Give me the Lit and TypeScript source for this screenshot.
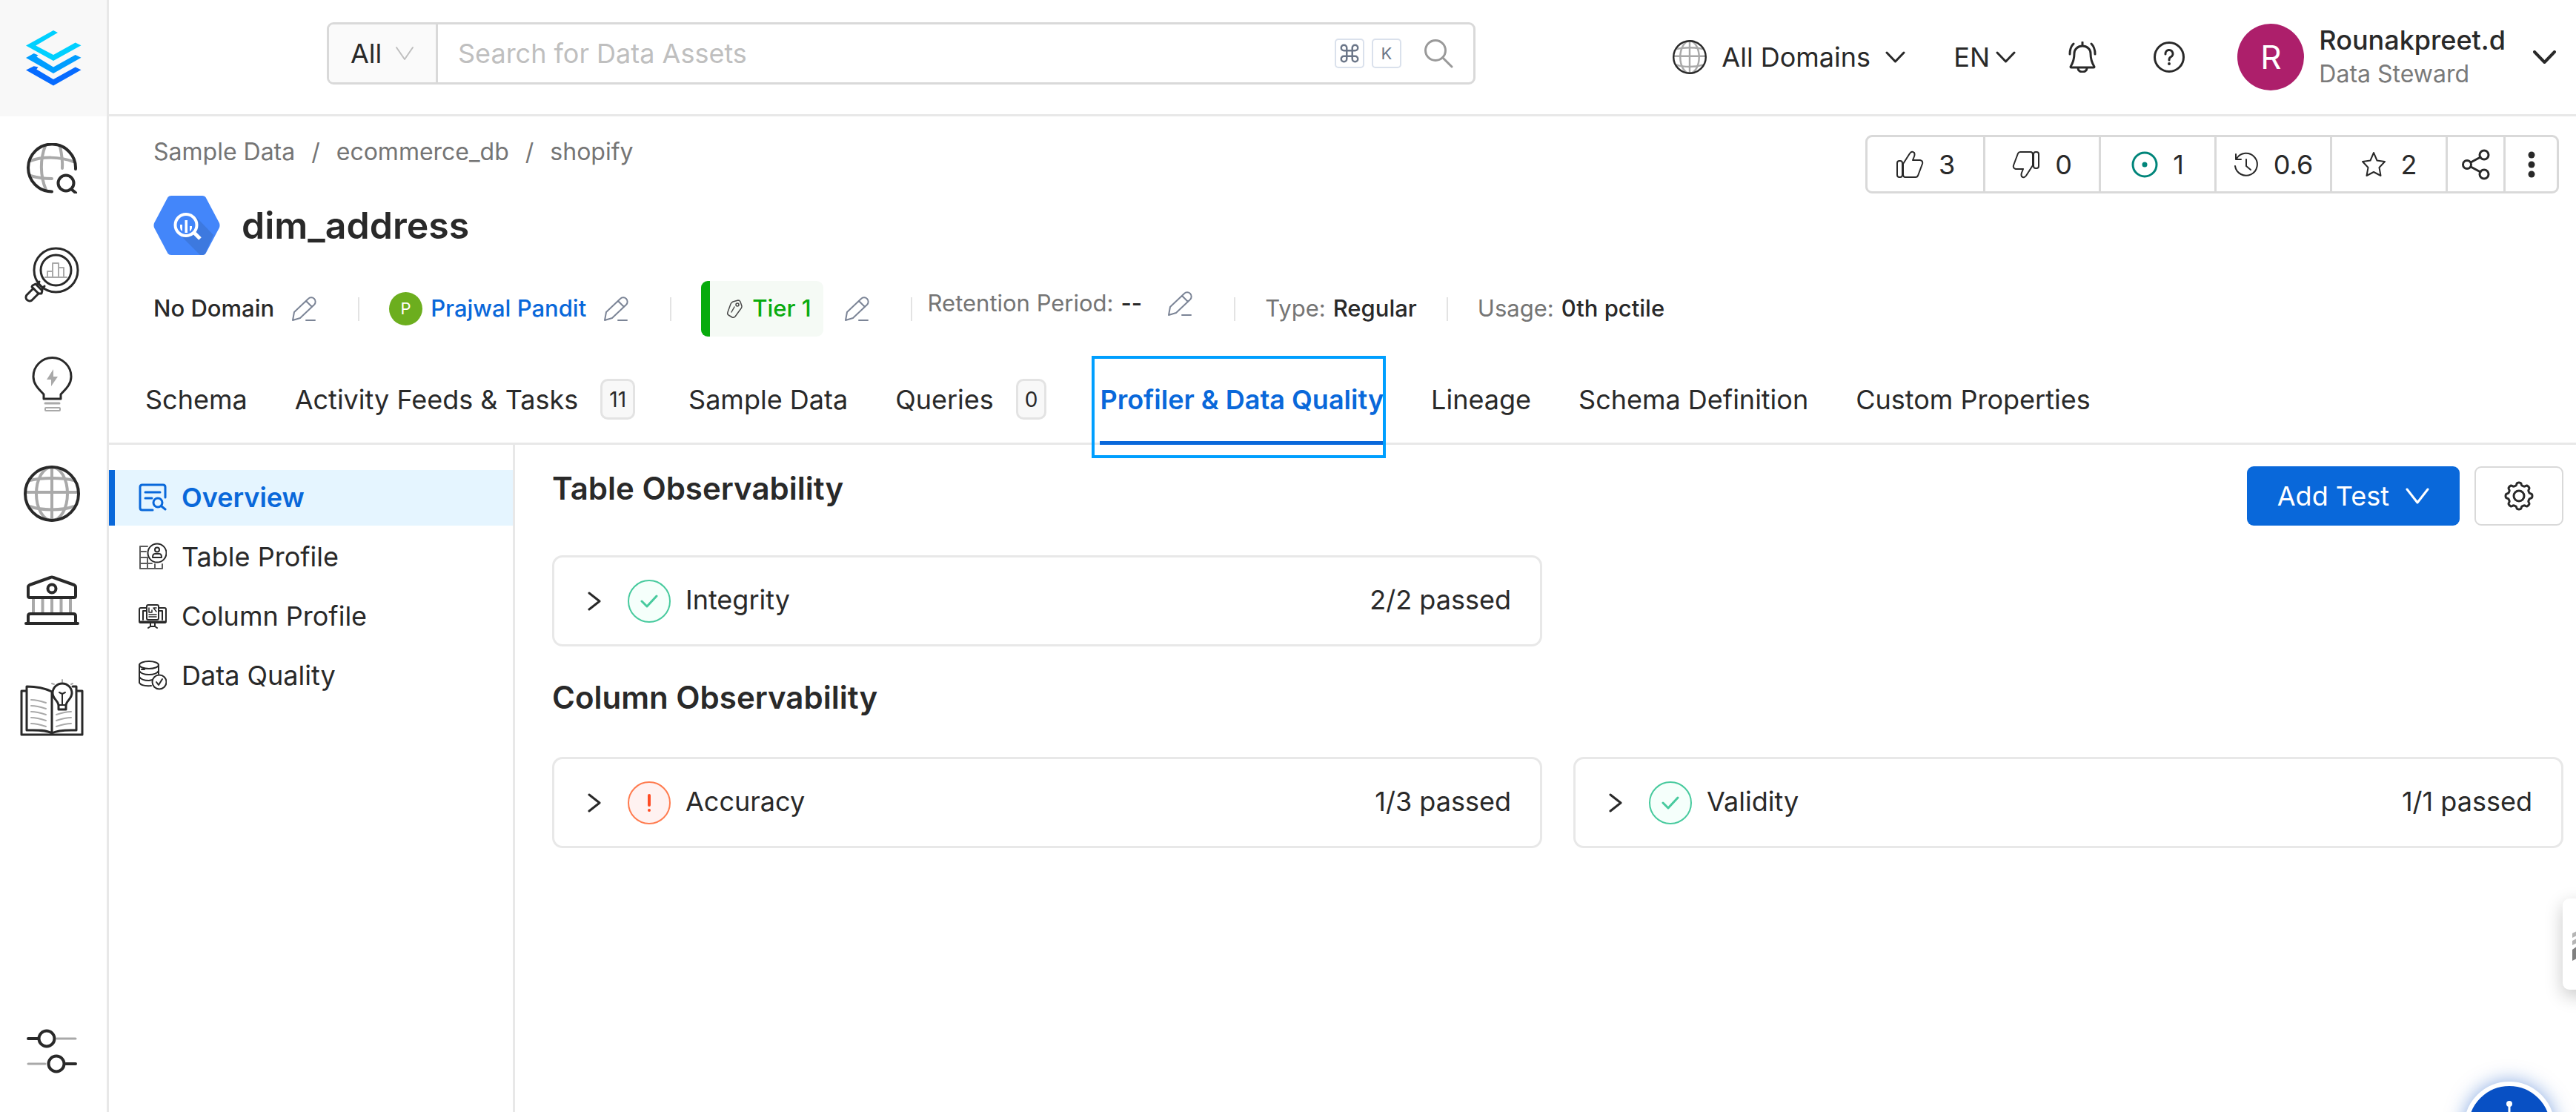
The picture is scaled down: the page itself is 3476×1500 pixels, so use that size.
import { LitElement, html, css, svg, nothing } from "lit";
import { customElement, property, state } from "lit/decorators.js";
import { classMap } from "lit/directives/class-map.js";

/** Wavy closed outline used by the settings gear. */
function gearPath(cx: number, cy: number, radius: number, depth: number, teeth: number): string {
  const points: string[] = [];
  for (let i = 0; i < 240; i++) {
    const a = (i / 240) * Math.PI * 2 - Math.PI / 2;
    const wave = Math.tanh(2 * Math.cos(teeth * (a + Math.PI / 2)));
    const r = radius + depth * wave;
    points.push(`${(cx + r * Math.cos(a)).toFixed(2)} ${(cy + r * Math.sin(a)).toFixed(2)}`);
  }
  return `M${points.join("L")}Z`;
}

const icon = (w: number, h: number, body: unknown) => html`<svg
  width=${w}
  height=${h}
  viewBox="0 0 ${w} ${h}"
  fill="none"
  stroke="currentColor"
  stroke-width="3"
  stroke-linecap="round"
  stroke-linejoin="round"
  aria-hidden="true"
>
  ${body}
</svg>`;

const chevron = (w: number, h: number, width = 3) =>
  icon(w, h, svg`<path stroke-width=${width} d="M2 2 L${w / 2} ${h - 2} L${w - 2} 2"/>`);

const logo = icon(
  75,
  77,
  svg`<g stroke="none">
    <path fill="#00d0ff" d="M37 1L43 4L13.300 21.600L37 34L66.700 17.500L74.500 21.300L37 42L0 21.600Z"/>
    <path fill="#009dff" d="M0 38L10.700 32L16.500 34.500L14.300 36.500L37 50.500L66.700 34L74.500 37.800L37 59L0 38Z"/>
    <path fill="#066bff" d="M0 54.500L10.700 49.200L16.500 50.500L14.300 53.500L37 67L66.700 50.500L74.500 54.300L37 75.500L0 54.500Z"/>
  </g>`,
);

const exploreIcon = icon(
  69,
  68,
  svg`<g stroke="#a9a9a9" stroke-width="4">
      <path d="M25 4C18 22 18 44 26 63"/><path d="M45 4C47 14 49 24 48 34"/>
      <path d="M5 24C22 18 44 18 63 25"/><path d="M5 44C15 47 24 48 34 48"/>
    </g>
    <path stroke-width="4" d="M34 65.500A32 32 0 1 1 66 35"/>
    <circle cx="53" cy="54" r="10.500" stroke-width="4"/><path stroke-width="4" d="M60 62L66 67"/>`,
);

const qualityIcon = icon(
  76,
  76,
  svg`<circle cx="43.500" cy="31.500" r="29.500"/><circle cx="43.500" cy="31.500" r="20.500"/>
    <g stroke="#a9a9a9" stroke-width="2"><path d="M29 41H58"/><path d="M32 41V33H39M39 41V22H47V41M47 28H54V41"/></g>
    <path d="M12 52L16 50L25 59L24 63L20 63L11 54Z"/><path d="M21 47L18 51M28 53L25 57"/>
    <path d="M13 56L4 65A5 5 0 0 0 11 72L20 63"/>`,
);

const insightIcon = icon(
  55,
  75,
  svg`<path stroke-width="3" d="M16 57V51C12 46 2 39 2 27A25.500 25.500 0 0 1 53 27C53 39 43 46 39 51V57H16Z"/>
    <path fill="#a9a9a9" stroke="none" d="M29 17L20 31H26L26 40L35 27H29Z"/>
    <g stroke="#a9a9a9"><path d="M18 63H37"/><rect x="18" y="69" width="20" height="4" rx="1" stroke-width="2"/></g>`,
);

const domainIcon = (size: number, width: number) => html`<svg
  width=${size}
  height=${size}
  viewBox="0 0 76 76"
  fill="none"
  stroke="currentColor"
  stroke-width=${width}
  aria-hidden="true"
>
  <g stroke="#a9a9a9">
    <path d="M38 2V74M2 36H74" />
    <ellipse cx="38" cy="38" rx="21" ry="36" />
    <path d="M8 20C25 16 51 16 68 20M8 55C25 61 51 61 68 55" />
  </g>
  <circle cx="38" cy="38" r="36" />
</svg>`;

const governIcon = icon(
  74,
  68,
  svg`<g stroke="#a9a9a9" stroke-width="4" stroke-linecap="butt"><path d="M12 32V50M24.500 32V50M37 32V50M49.500 32V50M62 32V50"/></g>
    <path stroke-width="4" d="M5 28V16Q5 14 7 13L35 3Q37 2 39 3L67 13Q69 14 69 16V28Q69 30 67 30H7Q5 30 5 28Z"/>
    <circle cx="37" cy="18" r="5.500" stroke-width="4"/>
    <path stroke-width="4" d="M5 65V55Q5 52 8 52H66Q69 52 69 55V65M2 65H72"/>`,
);

const glossaryIcon = icon(
  86,
  78,
  svg`<g stroke="#a9a9a9" stroke-width="2"><path d="M57 1V4M43 6L46 7M71 6L69 7"/>
      <path d="M15 28C22 28 29 30 35 32M15 36C22 36 29 38 35 40M15 44C22 44 29 46 35 48M15 52C22 52 29 54 35 56M15 60C22 60 29 62 35 64"/>
      <path d="M69 44C61 44 55 46 49 48M69 52C61 52 55 54 49 56M69 60C61 60 55 62 49 64"/></g>
    <path d="M8 16H2V75H84V16H77"/><path d="M43 73C34 68 20 69 9 69V10C22 10 33 12 43 17V73C52 68 66 69 76 69V10H71"/>
    <path fill="#fff" d="M52 36C52 29 44 27 44 19A13 13 0 0 1 70 19C70 27 62 29 62 36V41H52Z"/>
    <path d="M52 35H62M57 35V20M53 18L57 20L61 18" stroke-width="2"/>`,
);

const slidersIcon = icon(
  70,
  66,
  svg`<g stroke="#a9a9a9"><path d="M42 15H67M3 49H26"/></g>
    <path stroke-width="4" d="M3 15H16M54 49H67"/>
    <circle cx="28" cy="15" r="10.500" stroke-width="4"/><circle cx="41" cy="49" r="10.500" stroke-width="4"/>`,
);

const pencilIcon = icon(
  34,
  34,
  svg`<path stroke-width="2" d="M2 32L4 21L23 3A5.500 5.500 0 0 1 31 11L12 29ZM20 6L28 14M20 32H32"/>`,
);

const tableHexagon = icon(
  90,
  80,
  svg`<g stroke="none">
    <path fill="#4386fa" d="M24 0H66Q69 0 70.500 2L89 37Q90 40 89 43L70.500 78Q69 80 66 80H24Q21 80 19.500 78L1 43Q0 40 1 37L19.500 2Q21 0 24 0Z"/>
    <path fill="#3d79df" d="M57 28L81 53L70 78Q69 80 66 80H63L34 51Z"/>
    <circle cx="44" cy="39" r="15" fill="#4386fa"/>
    <path fill="#fff" d="M36 39H39V48Q36 46 36 43ZM42.500 33H46V50H42.500ZM49 41H52V44Q51 47 49 48Z"/>
  </g>
  <circle cx="44" cy="39.500" r="14.500" stroke="#fff" stroke-width="4"/><path stroke="#fff" stroke-width="5" stroke-linecap="butt" d="M54 49L63 58"/>`,
);

const thumbIcon = icon(
  38,
  38,
  svg`<g stroke-width="2"><rect x="2" y="14" width="7" height="22" rx="3"/>
    <path d="M10 18L19 4Q22 0 25 3Q26 5 25 8L23 13H33Q37 14 36 18L30 34Q29 36 27 36H13Q10 36 10 32Z"/></g>`,
);

const bellIcon = icon(
  38,
  42,
  svg`<g stroke-width="3"><path d="M19 1V6M3 34Q8 26 8 16A11 10 0 0 1 30 16Q30 26 35 34Q35 35 34 35H4Q3 35 3 34Z"/>
    <path d="M13 36A6 5 0 0 0 25 36M2 17Q2 8 7 3M36 17Q36 8 31 3"/></g>`,
);

const helpIcon = icon(
  42,
  42,
  svg`<circle cx="21" cy="21" r="19.500"/><path d="M16 17A5 5 0 1 1 23 21Q21 22 21 25"/><circle cx="21" cy="30" r="1" stroke-width="2"/>`,
);

const versionIcon = icon(
  34,
  36,
  svg`<g stroke-width="2"><path d="M4 10A15 15 0 1 1 2 20"/><path d="M3 4V11H10"/><path d="M17 11V20L23 25"/></g>`,
);

const starIcon = icon(
  34,
  36,
  svg`<path stroke-width="2" d="M17 2L21.500 12.500L32 14L24.500 22L26.500 33L17 28L7.500 33L9.500 22L2 14L12.500 12.500Z"/>`,
);

const shareIcon = icon(
  38,
  42,
  svg`<circle cx="7" cy="21" r="5.500"/><circle cx="30" cy="8" r="6"/><circle cx="30" cy="34" r="6"/><path d="M12 18L25 11M12 24L25 31"/>`,
);

const dotsIcon = icon(
  10,
  38,
  svg`<g fill="currentColor" stroke="none"><circle cx="5" cy="6" r="4.500"/><circle cx="5" cy="19" r="4.500"/><circle cx="5" cy="32" r="4.500"/></g>`,
);

const tagIcon = icon(
  22,
  26,
  svg`<path stroke-width="1.500" d="M2 17L6 6Q7 4 9 3L16 1Q18 1 19 3L21 9Q21 11 20 12L12 23Q10 25 8 24L3 21Q1 20 2 17ZM7 17L11 10"/><circle cx="15" cy="7" r="2" stroke-width="1.500"/>`,
);

const overviewIcon = icon(
  38,
  38,
  svg`<path d="M36 19V5Q36 2 33 2H5Q2 2 2 5V33Q2 36 5 36H19M9 12H29M9 20H18"/><circle cx="26" cy="26" r="6"/><path d="M31 31L36 35"/>`,
);

const tableProfileIcon = icon(
  38,
  38,
  svg`<g stroke-width="2"><path stroke="#5c5c5c" d="M12 5H2V35H32V29M2 12H10M2 20H12M2 28H18M12 20V35M22 29V35"/>
    <circle cx="25" cy="14" r="12.500"/><circle cx="25" cy="9.500" r="3"/><path d="M19 20Q19 15 22 15H28Q31 15 31 20Z"/></g>`,
);

const columnProfileIcon = icon(
  38,
  34,
  svg`<rect x="1" y="6" width="36" height="20" rx="2" stroke-width="2"/><path stroke-width="3" d="M2 25H36"/>
    <g stroke-width="2"><path d="M11 10H6V22M27 10H32V22" /><rect fill="#fff" x="11" y="2" width="16" height="20" rx="2"/>
    <path stroke-width="1.500" d="M14 6V12H18M18 12V9M20 6L24 11M21 6H24M14 15H24M14 18H24"/><path d="M16 27V31M22 27V31M13 33L16 31H22L25 33"/></g>`,
);

const dataQualityIcon = icon(
  38,
  40,
  svg`<g stroke-width="2"><ellipse cx="14" cy="6" rx="13" ry="5"/><path d="M1 6V30Q4 35 17 34M27 6V18M1 14Q4 19 14 19T27 14M1 22Q4 27 14 27L19 26M4 12H8"/>
    <circle cx="28" cy="29" r="9.500"/><path d="M24 29L27 33L32 25"/></g>`,
);

const gearIcon = icon(
  40,
  40,
  svg`<path stroke-width="3" d=${gearPath(20, 20, 16.2, 1.8, 8)}/><circle cx="20" cy="20" r="7"/>`,
);

const searchIcon = icon(40, 40, svg`<circle cx="16" cy="16" r="13.500"/><path d="M26 26L38 38"/>`);

const commandIcon = html`<svg
  width="30"
  height="30"
  viewBox="0 0 24 24"
  fill="none"
  stroke="currentColor"
  stroke-width="2"
  aria-hidden="true"
>
  <path
    d="M18 3a3 3 0 0 0-3 3v12a3 3 0 1 0 3-3H6a3 3 0 1 0 3 3V6a3 3 0 1 0-3 3h12a3 3 0 0 0 0-6z"
  />
</svg>`;

const base = css`
  *,
  *::before,
  *::after {
    box-sizing: border-box;
  }
  button,
  select,
  input {
    margin: 0;
    padding: 0;
    border: 0;
    background: none;
    color: inherit;
    font: inherit;
    appearance: none;
    outline: none;
  }
  button {
    cursor: pointer;
  }
  a {
    color: inherit;
    text-decoration: none;
  }
  svg {
    display: block;
    flex: none;
  }
`;

@customElement("side-rail")
class SideRail extends LitElement {
  static styles = [
    base,
    css`
      :host {
        display: flex;
        flex-direction: column;
        flex: none;
        width: 147px;
        border-right: 3px solid #e8e8e8;
      }
      .brand {
        display: flex;
        align-items: center;
        justify-content: center;
        height: 157px;
        background: #f8f8f8;
      }
      .links {
        display: flex;
        flex: 1;
        flex-direction: column;
        align-items: center;
        gap: 72px;
        padding: 36px 4px 48px 0;
      }
      .last {
        margin-top: auto;
      }
    `,
  ];

  render() {
    return html`
      <a class="brand" href="#home" aria-label="Home">${logo}</a>
      <nav class="links" aria-label="Main">
        <a href="#explore" aria-label="Explore">${exploreIcon}</a>
        <a href="#quality" aria-label="Quality">${qualityIcon}</a>
        <a href="#insights" aria-label="Insights">${insightIcon}</a>
        <a href="#domains" aria-label="Domains">${domainIcon(76, 4)}</a>
        <a href="#govern" aria-label="Govern">${governIcon}</a>
        <a href="#glossary" aria-label="Glossary">${glossaryIcon}</a>
        <a class="last" href="#settings" aria-label="Settings">${slidersIcon}</a>
      </nav>
    `;
  }
}

@customElement("top-bar")
class TopBar extends LitElement {
  static styles = [
    base,
    css`
      :host {
        display: flex;
        align-items: center;
        height: 157px;
        padding: 0 27px 0 294px;
        border-bottom: 3px solid #e8e8e8;
      }
      .search {
        display: flex;
        flex: 0 1 1550px;
        height: 84px;
        margin-bottom: 10px;
        border: 3px solid #d9d9d9;
        border-radius: 9px;
        overflow: hidden;
      }
      .scope {
        display: flex;
        align-items: center;
        gap: 17px;
        padding: 0 29px;
        border-right: 3px solid #d9d9d9;
        background: #fafafa;
        color: #bfbfbf;
      }
      .scope select {
        color: #292929;
      }
      .query {
        flex: 1;
        min-width: 0;
        padding: 0 27px;
      }
      .query::placeholder {
        color: #bfbfbf;
        opacity: 1;
      }
      .keys {
        display: flex;
        align-items: center;
        gap: 10px;
        color: #6b7688;
      }
      .key {
        display: flex;
        align-items: center;
        justify-content: center;
        width: 40px;
        height: 40px;
        border: 2px solid #dae1ec;
        border-radius: 5px;
        font-family: inherit;
        font-size: 22px;
      }
      .go {
        padding: 0 27px 0 30px;
        color: #999;
      }
      .tools {
        display: flex;
        align-items: center;
        gap: 65px;
        margin-left: auto;
      }
      .picker {
        display: flex;
        align-items: center;
        gap: 20px;
      }
      .language {
        display: flex;
        align-items: center;
        gap: 8px;
      }
      .tool {
        padding: 0 6px;
      }
      .account {
        display: flex;
        align-items: center;
        gap: 20px;
        text-align: left;
      }
      .avatar {
        display: flex;
        align-items: center;
        justify-content: center;
        width: 90px;
        height: 90px;
        border-radius: 50%;
        background: #ad1f6b;
        color: #fff;
        font-size: 44px;
      }
      .who {
        display: grid;
        margin-right: 17px;
      }
      .name {
        font-weight: 500;
        line-height: 46px;
      }
      .role {
        color: #7a7a7a;
        font-size: 32px;
        line-height: 46px;
      }
    `,
  ];

  render() {
    return html`
      <form class="search" role="search" @submit=${(e: Event) => e.preventDefault()}>
        <label class="scope">
          <select aria-label="Search scope">
            <option>All</option>
          </select>
          ${chevron(26, 20, 2)}
        </label>
        <input class="query" type="text" aria-label="Search" placeholder="Search for Data Assets" />
        <span class="keys">
          <kbd class="key">${commandIcon}</kbd>
          <kbd class="key">K</kbd>
        </span>
        <button class="go" type="submit" aria-label="Search">${searchIcon}</button>
      </form>
      <div class="tools">
        <label class="picker">
          ${domainIcon(46, 4)}
          <select aria-label="Domain">
            <option>All Domains</option>
          </select>
          ${chevron(27, 16)}
        </label>
        <label class="language">
          <select aria-label="Language">
            <option>EN</option>
          </select>
          ${chevron(27, 16)}
        </label>
        <button class="tool" aria-label="Notifications">${bellIcon}</button>
        <button class="tool" aria-label="Help">${helpIcon}</button>
        <button class="account">
          <span class="avatar">R</span>
          <span class="who">
            <span class="name">Rounakpreet.d</span>
            <span class="role">Data Steward</span>
          </span>
          ${chevron(31, 18, 4)}
        </button>
      </div>
    `;
  }
}

@customElement("entity-header")
class EntityHeader extends LitElement {
  static styles = [
    base,
    css`
      :host {
        display: flex;
        align-items: flex-start;
        justify-content: space-between;
        padding: 25px 23px 0 60px;
      }
      .crumbs {
        display: flex;
        gap: 22px;
        color: #757575;
        font-size: 32px;
        line-height: 46px;
      }
      .title {
        display: flex;
        align-items: center;
        gap: 29px;
        margin-top: 36px;
      }
      h1 {
        margin: 0;
        font-size: 50px;
        font-weight: 600;
        line-height: 60px;
      }
      .facts {
        display: flex;
        align-items: center;
        height: 75px;
        margin-top: 35px;
        font-size: 31px;
        font-weight: 500;
      }
      .fact {
        display: flex;
        align-items: center;
        gap: 10px;
      }
      .bar {
        width: 2px;
        height: 32px;
        margin: 0 40px 0 56px;
        background: #e3e3e3;
      }
      .bar.tight {
        margin-right: 21px;
      }
      .bar.even {
        margin-left: 40px;
      }
      .label {
        color: #757575;
        font-weight: 400;
      }
      .edit {
        margin-left: 13px;
        color: #7b8496;
      }
      .raised {
        padding-bottom: 14px;
      }
      .raised .edit {
        margin-left: 24px;
      }
      .owner {
        display: flex;
        align-items: center;
        gap: 11px;
        color: #0968da;
      }
      .initial {
        display: flex;
        align-items: center;
        justify-content: center;
        width: 45px;
        height: 45px;
        border-radius: 50%;
        background: #6cae1e;
        color: #fff;
        font-size: 22px;
        font-weight: 400;
      }
      .tier {
        display: flex;
        align-items: center;
        gap: 13px;
        height: 75px;
        margin-right: 5px;
        padding: 0 16px 0 22px;
        border-left: 12px solid #08ab0d;
        border-radius: 9px;
        background: #f5faf5;
        color: #08ab0d;
      }
      .tier svg {
        color: #4a4a4a;
      }
      .actions {
        display: flex;
        height: 79px;
        border: 3px solid #d9d9d9;
        border-radius: 9px;
      }
      .action {
        display: flex;
        align-items: center;
        justify-content: center;
        gap: 20px;
        width: 156px;
      }
      .action + .action {
        border-left: 3px solid #d9d9d9;
      }
      .action.slim {
        width: 78px;
      }
      .action.slim:last-child {
        width: 72px;
      }
      .flip svg {
        transform: rotate(180deg);
      }
      .open-task {
        color: #00857a;
      }
    `,
  ];

  private edit(label: string) {
    return html`<button class="edit" aria-label="Edit ${label}">${pencilIcon}</button>`;
  }

  render() {
    return html`
      <div>
        <nav class="crumbs" aria-label="Breadcrumb">
          <a href="#sample-data">Sample Data</a><span>/</span>
          <a href="#ecommerce_db">ecommerce_db</a><span>/</span>
          <a href="#shopify">shopify</a>
        </nav>
        <div class="title">
          ${tableHexagon}
          <h1>dim_address</h1>
        </div>
        <div class="facts">
          <div class="fact"><span>No Domain</span>${this.edit("domain")}</div>
          <span class="bar"></span>
          <div class="fact">
            <a class="owner" href="#owner"><span class="initial">P</span>Prajwal Pandit</a>
            ${this.edit("owner")}
          </div>
          <span class="bar"></span>
          <div class="fact">
            <a class="tier" href="#tier">${tagIcon}<span>Tier 1</span></a>
            ${this.edit("tier")}
          </div>
          <span class="bar tight"></span>
          <div class="fact raised">
            <span class="label">Retention Period:</span><span>--</span>
            ${this.edit("retention period")}
          </div>
          <span class="bar"></span>
          <div class="fact"><span class="label">Type:</span><span>Regular</span></div>
          <span class="bar even"></span>
          <div class="fact"><span class="label">Usage:</span><span>0th pctile</span></div>
        </div>
      </div>
      <div class="actions">
        <button class="action" aria-label="Up vote">${thumbIcon}<span>3</span></button>
        <button class="action flip" aria-label="Down vote">${thumbIcon}<span>0</span></button>
        <button class="action" aria-label="Open tasks">
          <span class="open-task"
            >${icon(
              36,
              36,
              svg`<circle cx="18" cy="18" r="16"/><circle cx="18" cy="18" r="3.500" fill="currentColor" stroke="none"/>`,
            )}</span
          ><span>1</span>
        </button>
        <button class="action" aria-label="Version">${versionIcon}<span>0.6</span></button>
        <button class="action" aria-label="Follow">${starIcon}<span>2</span></button>
        <button class="action slim" aria-label="Share">${shareIcon}</button>
        <button class="action slim" aria-label="More">${dotsIcon}</button>
      </div>
    `;
  }
}

interface Tab {
  label: string;
  count?: number;
}

@customElement("entity-tabs")
class EntityTabs extends LitElement {
  static styles = [
    base,
    css`
      :host {
        display: block;
        margin-top: 26px;
        border-bottom: 3px solid #e8e8e8;
      }
      .tabs {
        display: flex;
        gap: 64px;
        padding-left: 49px;
      }
      .tab {
        position: relative;
        display: flex;
        align-items: center;
        height: 117px;
        white-space: nowrap;
      }
      .counted {
        margin-right: 8px;
      }
      .count {
        display: flex;
        align-items: center;
        justify-content: center;
        height: 55px;
        margin-left: 30px;
        padding: 0 9px;
        border: 3px solid #e3e3e3;
        border-radius: 10px;
        background: #f8f8f8;
        font-size: 28px;
      }
      .active {
        color: #0968da;
        font-weight: 600;
      }
      .active::before {
        content: "";
        position: absolute;
        inset: auto 0 -3px 0;
        height: 5px;
        background: #0968da;
      }
      .active::after {
        content: "";
        position: absolute;
        inset: 0 -3px -21px -11px;
        border: 4px solid #009fff;
      }
    `,
  ];

  @state() private current = "Profiler & Data Quality";

  private tabs: Tab[] = [
    { label: "Schema" },
    { label: "Activity Feeds & Tasks", count: 11 },
    { label: "Sample Data" },
    { label: "Queries", count: 0 },
    { label: "Profiler & Data Quality" },
    { label: "Lineage" },
    { label: "Schema Definition" },
    { label: "Custom Properties" },
  ];

  render() {
    return html`<div class="tabs" role="tablist">
      ${this.tabs.map(
        ({ label, count }) => html`<button
          role="tab"
          aria-selected=${label === this.current}
          class=${classMap({
            tab: true,
            active: label === this.current,
            counted: count !== undefined,
          })}
          @click=${() => (this.current = label)}
        >
          ${label}${count === undefined ? nothing : html`<span class="count">${count}</span>`}
        </button>`,
      )}
    </div>`;
  }
}

@customElement("profiler-menu")
class ProfilerMenu extends LitElement {
  static styles = [
    base,
    css`
      :host {
        display: block;
        flex: none;
        width: 548px;
        border-right: 3px solid #e8e8e8;
      }
      .menu {
        display: grid;
        gap: 5px;
        padding-top: 34px;
      }
      .item {
        display: flex;
        align-items: center;
        gap: 20px;
        height: 75px;
        padding: 0 0 2px 32px;
        border-left: 8px solid transparent;
      }
      .current {
        border-left-color: #0968da;
        background: #e5f5ff;
        color: #0968da;
        font-weight: 600;
      }
    `,
  ];

  render() {
    return html`<nav class="menu" aria-label="Profiler">
      <a class="item current" href="#overview" aria-current="page">${overviewIcon}Overview</a>
      <a class="item" href="#table-profile">${tableProfileIcon}Table Profile</a>
      <a class="item" href="#column-profile">${columnProfileIcon}Column Profile</a>
      <a class="item" href="#data-quality">${dataQualityIcon}Data Quality</a>
    </nav>`;
  }
}

@customElement("check-card")
class CheckCard extends LitElement {
  static styles = [
    base,
    css`
      :host {
        display: block;
      }
      .card {
        display: flex;
        align-items: center;
        width: 100%;
        height: 123px;
        padding: 0 39px 0 44px;
        border: 3px solid #e8e8e8;
        border-radius: 14px;
      }
      .badge {
        display: flex;
        align-items: center;
        justify-content: center;
        width: 58px;
        height: 58px;
        margin: 0 20px 0 36px;
        border: 2px solid #48ca9e;
        border-radius: 50%;
        background: #f5fffb;
        color: #48ca9e;
      }
      .failed {
        border-color: #ff7c50;
        background: #fff2f1;
        color: #ff4c24;
      }
      .text {
        padding-bottom: 4px;
      }
      .result {
        margin-left: auto;
      }
    `,
  ];

  @property() label = "";
  @property({ type: Number }) passed = 0;
  @property({ type: Number }) total = 0;

  render() {
    const ok = this.passed === this.total;
    const mark = ok
      ? icon(24, 18, svg`<path d="M2 9L9 16L22 2"/>`)
      : icon(6, 26, svg`<path stroke-width="4" d="M3 3V16"/><path stroke-width="4" d="M3 23V23.100"/>`);
    return html`<button class="card" aria-expanded="false">
      ${icon(19, 26, svg`<path d="M3 2L17 13L3 24"/>`)}
      <span class=${classMap({ badge: true, failed: !ok })}>${mark}</span>
      <span class="text">${this.label}</span>
      <span class="text result">${this.passed}/${this.total} passed</span>
    </button>`;
  }
}

@customElement("app-root")
class AppRoot extends LitElement {
  static styles = [
    base,
    css`
      :host {
        position: relative;
        display: flex;
        min-height: 100vh;
        overflow: hidden;
        background: #fff;
        color: #292929;
        font-family: Inter, "Open Sans", sans-serif;
        font-size: 36px;
        line-height: 1.5;
      }
      .page {
        display: flex;
        flex: 1;
        flex-direction: column;
        min-width: 0;
      }
      .body {
        display: flex;
        flex: 1;
      }
      .content {
        flex: 1;
        padding: 29px 17px 0 50px;
      }
      .top {
        display: flex;
        align-items: flex-start;
        justify-content: space-between;
        height: 80px;
      }
      h2 {
        margin: 0;
        font-size: 42px;
        font-weight: 600;
        line-height: 60px;
      }
      .second {
        margin-top: 39px;
      }
      .cards {
        display: grid;
        grid-template-columns: 1fr 1fr;
        gap: 42px;
        margin-top: 40px;
      }
      .second + .cards {
        margin-top: 50px;
      }
      .buttons {
        display: flex;
        gap: 20px;
      }
      .add {
        display: flex;
        align-items: center;
        gap: 22px;
        height: 80px;
        padding: 0 41px;
        border-radius: 9px;
        background: #0968da;
        color: #fff;
      }
      .configure {
        display: flex;
        align-items: center;
        justify-content: center;
        width: 120px;
        height: 80px;
        border: 2px solid #d9d9d9;
        border-radius: 9px;
      }
      .drawer {
        position: absolute;
        right: -60px;
        bottom: 165px;
        width: 78px;
        height: 123px;
        padding: 42px 13px;
        border-radius: 9px;
        background: #fff;
        box-shadow: 0 8px 24px rgb(0 0 0 / 22%);
      }
      .bot {
        position: absolute;
        right: 29px;
        bottom: -81px;
        width: 122px;
        height: 122px;
        border: 6px solid #fff;
        border-radius: 50%;
        background: #0850c4;
        box-shadow: 0 0 26px rgb(9 80 196 / 50%);
        color: #fff;
      }
    `,
  ];

  render() {
    return html`
      <side-rail></side-rail>
      <div class="page">
        <top-bar></top-bar>
        <entity-header></entity-header>
        <entity-tabs></entity-tabs>
        <div class="body">
          <profiler-menu></profiler-menu>
          <main class="content">
            <div class="top">
              <h2>Table Observability</h2>
              <div class="buttons">
                <button class="add">Add Test ${chevron(32, 22)}</button>
                <button class="configure" aria-label="Settings">${gearIcon}</button>
              </div>
            </div>
            <div class="cards">
              <check-card label="Integrity" passed="2" total="2"></check-card>
            </div>
            <h2 class="second">Column Observability</h2>
            <div class="cards">
              <check-card label="Accuracy" passed="1" total="3"></check-card>
              <check-card label="Validity" passed="1" total="1"></check-card>
            </div>
          </main>
        </div>
      </div>
      <button class="drawer" aria-label="Resources">
        ${icon(
          40,
          42,
          svg`<g stroke="none"><path fill="#b5b5b5" d="M0 5L10 0V6L0 11ZM0 15L10 10V16L0 21Z"/><path fill="#808080" d="M0 27L10 20V37L0 42Z"/></g>`,
        )}
      </button>
      <button class="bot" aria-label="Assistant">
        ${icon(
          110,
          110,
          svg`<circle cx="55" cy="24" r="4" fill="currentColor" stroke="none"/><path d="M55 24V44"/><rect x="28" y="44" width="54" height="36" rx="12"/>`,
        )}
      </button>
    `;
  }
}
